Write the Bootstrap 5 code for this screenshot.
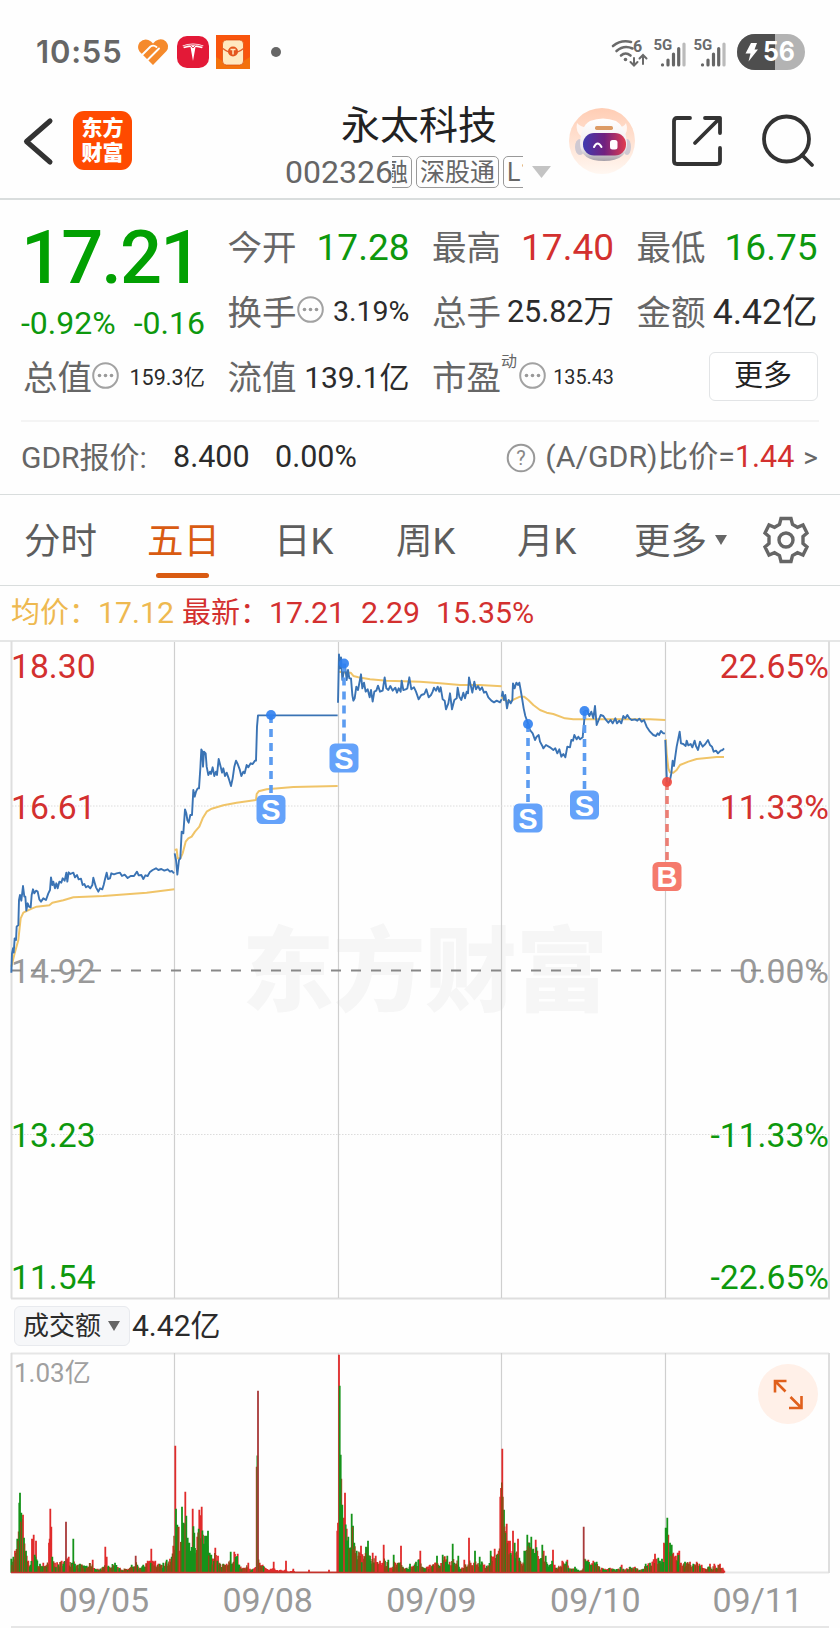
<!DOCTYPE html>
<html lang="zh-CN">
<head>
<meta charset="utf-8">
<meta name="viewport" content="width=device-width, initial-scale=1">
<title>永太科技 002326</title>
<link href="https://cdn.jsdelivr.net/npm/bootstrap@5.3.0/dist/css/bootstrap.min.css" rel="stylesheet">
<style>
  :root { --up:#d3302f; --down:#0d980d; --ink:#2b2b2b; --soft:#666; --accent:#d95b12; --rule:#d9dddd; }
  body { width:840px; height:1628px; overflow:hidden; background:#fefefe; color:var(--ink); line-height:1; font-family:Roboto,"Noto Sans CJK SC",sans-serif; }
  svg { display:block; flex:none; overflow:visible; }
  svg text { font-family:Roboto,"Noto Sans CJK SC",sans-serif; }
  .t-up { color:var(--up); } .t-down { color:var(--down); } .t-soft { color:var(--soft); }
  .statusbar { height:103px; padding-left:36px; padding-right:34px; }
  .clock { font:600 31px/1 Inter,Roboto,sans-serif; letter-spacing:.8px; color:#666; width:101px; }
  .topbar { height:97px; border-bottom:2px solid var(--rule); }
  .logo { width:59px; height:59px; margin-left:21px; border-radius:11px; background:#ff4a00; color:#fff; font-weight:900; font-size:21px; line-height:25px; padding-top:5px; }
  .title-col { width:266px; margin-left:153px; }
  .stock { font-size:39px; line-height:46px; color:#222; padding-left:2px; }
  .code { font-size:32px; line-height:46px; }
  .tags { width:133px; height:32px; overflow:hidden; margin-left:-1px; font-size:25px; }
  .tagbox { border:1.5px solid #999; border-radius:5px; height:32px; line-height:31px; padding:0 3px; white-space:nowrap; flex:none; }
  .quote { height:295px; border-bottom:1px solid var(--rule); padding:0 21px; }
  .quote-grid { display:grid; grid-template-columns:184px 182px 182px 182px; column-gap:22.5px; grid-template-rows:64px 65px 66px; padding-top:15px; height:222px; border-bottom:2px solid #f4f4f4; }
  .lbl { font-size:34.5px; color:var(--soft); white-space:nowrap; padding-top:3px; }
  .zhv { padding-top:2px; }
  .big { font-size:74px; font-weight:500; letter-spacing:-1.9px; color:#02a002; }
  .more-btn { width:109px; height:49px; border:1.5px solid #e2e4e6; border-radius:6px; font-size:29px; padding:2px 0 0; background:#fff; color:#222; margin-right:1px; margin-top:-2px; }
  .gdr { height:71px; font-size:30px; }
  .tabs { height:91px; border-bottom:1px solid var(--rule); font-size:36.5px; color:#5d5d5d; padding-left:24px; }
  .tabs > span { white-space:nowrap; flex:none; padding-top:5px; }
  .tab-on { color:var(--accent); position:relative; }
  .tab-on::after { content:""; position:absolute; left:9px; width:53px; height:5px; bottom:-17px; border-radius:3px; background:var(--accent); }
  .legend-row { height:54px; font-size:30.3px; padding-left:11px; }
  .legend-row span { flex:none; white-space:nowrap; }
  .legend-row .zh { font-size:29px; }
  .vol-head { height:54px; padding-left:14px; }
  .drop { width:116px; height:40px; border:1.5px solid #e8eaee; border-radius:6px; background:#f6f7f9; font-size:26px; padding-left:8px; }
  .dates { height:54px; margin:0 11px; padding-left:11px; border-bottom:2px solid #e6e6e6; font-size:34px; color:#999; }
  .dates span { width:163.8px; text-align:center; flex:none; }
</style>
</head>
<body>

<div class="statusbar d-flex align-items-center">
  <span class="clock">10:55</span>
  <svg width="32" height="28" viewBox="0 0 32 28"><path d="M16 27 2.500 13.500Q-.5 9.500 2.500 4.500 8-1 14 3.500L16 5.500 18.500 3Q24.500-.5 29 3.500 33 8.500 29.500 13Z" fill="#f58a2c"/><path d="M4.500 17.500 13.500 8.500Q16.500 6.500 19.500 9M10.500 22 22 10.500" fill="none" stroke="#fefefe" stroke-width="1.900" stroke-linecap="round"/></svg>
  <svg class="ms-2" width="32" height="32" viewBox="0 0 32 32"><rect width="32" height="32" rx="10" fill="#e31937"/><path d="M5.500 9.500Q16 5.500 26.500 9.500L25 12.200Q22 11.200 18.500 11L16 25 13.500 11Q10 11.200 7 12.200Z" fill="#fff"/><path d="M6 10.500Q16 7 26 10.500M13.500 9.500 16 12 18.500 9.500" fill="none" stroke="#e31937" stroke-width=".8"/></svg>
  <svg style="margin-left:7px" width="34" height="34" viewBox="0 0 34 34"><rect width="34" height="34" fill="#f9550d"/><path d="M0 22Q17 34 34 22V34H0Z" fill="#f3720c"/><rect x="6.500" y="5" width="21" height="25" rx="4" fill="#ffe9c0" stroke="#d84909" stroke-width=".7"/><path d="M7 13.500Q17 22 27.500 13.500" fill="none" stroke="#e2602c" stroke-width="1.200"/><circle cx="17" cy="16.500" r="5" fill="#e4571e"/><path d="M14.500 14.500H19.500M17 14.500V19.500" stroke="#ffe9c0" stroke-width="1.500"/></svg>
  <svg style="margin-left:21px" width="10" height="10"><circle cx="5" cy="5" r="5" fill="#666"/></svg>
  <svg class="ms-auto" width="195" height="40" viewBox="611 31 195 40">
    <g fill="none" stroke="#6a6a6a" stroke-width="2.600" stroke-linecap="round">
      <path d="M613 45Q621 38.500 631 41M616.500 50Q624 43.500 632.500 47.500M621 54.500Q625.500 50.500 630.500 54.500"/>
      <path d="M634 57V64M630.500 61 634 64.500 637.500 61M643 63V54.500M639.500 57.500 643 54 646.500 57.500" stroke-width="2"/></g>
    <circle cx="625.500" cy="58.500" r="1.800" fill="#6a6a6a"/>
    <text x="633" y="50.500" font-size="16" font-weight="700" fill="#6a6a6a">6</text>
    <text x="653.500" y="49" font-size="15" font-weight="700" fill="#6a6a6a">5G</text>
    <text x="693.500" y="49" font-size="15" font-weight="700" fill="#6a6a6a">5G</text>
    <g stroke="#666" stroke-width="3.200" stroke-linecap="round"><path d="M662.500 63.800V64M668 59V64M673.500 53V64M678.700 47.500V64"/><path d="M684 43V64" stroke="#bbb"/></g>
    <g stroke="#666" stroke-width="3.200" stroke-linecap="round"><path d="M702.500 63.800V64M708 59V64M713.500 53V64M718.700 47.500V64"/><path d="M724 43V64" stroke="#bbb"/></g>
    <rect x="737" y="33" width="68" height="36" rx="18" fill="#b3b3b3"/><path d="M775 33H755A18 18 0 0 0 755 69H775Z" fill="#4e4e4e"/>
    <path d="M751 42H757L754.500 48.500H758L748.500 60.500 750.500 52.500H745.500Z" fill="#fff"/>
    <text x="763" y="60" font-size="27" font-weight="700" fill="#fff" style="font-family:Inter,sans-serif" textLength="32" lengthAdjust="spacingAndGlyphs">56</text>
  </svg>
</div>

<div class="topbar d-flex align-items-start">
  <svg style="margin-left:22px;margin-top:14px" width="30" height="50" viewBox="0 0 30 50"><path d="M28 4 4.500 24.500 28 45" fill="none" stroke="#333" stroke-width="5" stroke-linecap="round" stroke-linejoin="round"/></svg>
  <div class="logo text-center mt-2">东方<br>财富</div>
  <div class="title-col text-center">
    <div class="stock">永太科技</div>
    <div class="code t-soft d-flex align-items-center"><span>002326</span>
      <div class="tags d-flex gap-1"><span class="tagbox" style="margin-left:-13px">融</span><span class="tagbox">深股通</span><span class="tagbox">L1</span></div>
      <svg style="margin-left:9px" width="19" height="12"><path d="M0 0H19L9.500 12Z" fill="#c4c4c4"/></svg>
    </div>
  </div>
  <svg style="margin-left:17px;margin-top:4px" width="68" height="68" viewBox="0 0 68 68">
    <defs><linearGradient id="peach" x2="0" y2="1"><stop stop-color="#ffcdb4"/><stop offset="1" stop-color="#fff7f1"/></linearGradient>
    <linearGradient id="visor"><stop stop-color="#3f3bb0"/><stop offset=".5" stop-color="#71217f"/><stop offset="1" stop-color="#e13c50"/></linearGradient>
    <linearGradient id="shell" x2="0" y2="1"><stop stop-color="#fff"/><stop offset=".7" stop-color="#efebed"/><stop offset="1" stop-color="#a59fa8"/></linearGradient></defs>
    <circle cx="34" cy="34" r="33" fill="url(#peach)"/>
    <path d="M9 16Q7 25 14 30L21 20Q13 21 9 16M58 16Q61 24 55 30L48 20Q56 21 58 16" fill="#fff6f2"/>
    <ellipse cx="12" cy="40" rx="5" ry="8" fill="#cfc9d2"/><ellipse cx="59" cy="40" rx="4" ry="8" fill="#cfc9d2"/>
    <path d="M22 14Q35 9 48 14Q57 19 59 35 60 54 36 54 12 54 12 36 13 19 22 14Z" fill="url(#shell)"/>
    <rect x="15" y="26" width="43" height="22.500" rx="11" fill="url(#visor)"/>
    <rect x="27" y="19" width="18" height="4" rx="1.700" fill="#dc9b65"/>
    <path d="M26 40Q29.500 33 33.500 40" fill="none" stroke="#fff" stroke-width="2" stroke-linecap="round"/><rect x="42" y="33" width="7.500" height="9.500" rx="2.500" fill="#fff"/>
  </svg>
  <svg style="margin-left:36px;margin-top:13px" width="50" height="50" viewBox="0 0 50 50" fill="none" stroke="#333" stroke-width="3.800" stroke-linecap="round" stroke-linejoin="round"><path d="M18 2H5Q2 2 2 5V45Q2 48 5 48H45Q48 48 48 45V32M33 2H48V17M48 2 23 27"/></svg>
  <svg style="margin-left:39px;margin-top:9px" width="56" height="56" viewBox="0 0 56 56" fill="none" stroke="#333" stroke-width="3.800" stroke-linecap="round"><circle cx="25.500" cy="27" r="22.500"/><path d="M41 43 51 53"/></svg>
</div>

<section class="quote">
  <div class="quote-grid">
    <div class="big d-flex align-items-center" style="padding-top:22px">17.21</div>
    <div class="d-flex align-items-center justify-content-between"><span class="lbl">今开</span><span class="t-down" style="font-size:37px">17.28</span></div>
    <div class="d-flex align-items-center justify-content-between"><span class="lbl">最高</span><span class="t-up" style="font-size:37px">17.40</span></div>
    <div class="d-flex align-items-center justify-content-between"><span class="lbl">最低</span><span class="t-down" style="font-size:37px;margin-right:1px">16.75</span></div>

    <div class="d-flex align-items-center t-down" style="font-size:32px;padding-top:22px"><span>-0.92%</span><span class="ms-auto">-0.16</span></div>
    <div class="d-flex align-items-center"><span class="lbl">换手</span><svg style="margin-top:-4px" width="27" height="27" viewBox="0 0 27 27"><circle cx="13.500" cy="13.500" r="12.300" fill="none" stroke="#a2a2a2" stroke-width="2"/><g fill="#999"><circle cx="7.500" cy="13.500" r="1.800"/><circle cx="13.500" cy="13.500" r="1.800"/><circle cx="19.500" cy="13.500" r="1.800"/></g></svg><span class="ms-auto zhv" style="font-size:28.500px">3.19%</span></div>
    <div class="d-flex align-items-center justify-content-between"><span class="lbl">总手</span><span class="zhv" style="font-size:30.500px">25.82万</span></div>
    <div class="d-flex align-items-center justify-content-between"><span class="lbl">金额</span><span class="zhv" style="font-size:35.500px;margin-right:1px">4.42亿</span></div>

    <div class="d-flex align-items-center"><span class="lbl" style="padding-left:2px">总值</span><svg style="margin-top:-4px" width="27" height="27" viewBox="0 0 27 27"><circle cx="13.500" cy="13.500" r="12.300" fill="none" stroke="#a2a2a2" stroke-width="2"/><g fill="#999"><circle cx="7.500" cy="13.500" r="1.800"/><circle cx="13.500" cy="13.500" r="1.800"/><circle cx="19.500" cy="13.500" r="1.800"/></g></svg><span class="ms-auto zhv" style="font-size:21.500px">159.3亿</span></div>
    <div class="d-flex align-items-center justify-content-between"><span class="lbl">流值</span><span class="zhv" style="font-size:30px">139.1亿</span></div>
    <div class="d-flex align-items-center"><span class="lbl">市盈</span><span class="t-soft align-self-start" style="font-size:16px;padding-top:10px">动</span><svg style="margin-top:-4px;margin-left:2px" width="27" height="27" viewBox="0 0 27 27"><circle cx="13.500" cy="13.500" r="12.300" fill="none" stroke="#a2a2a2" stroke-width="2"/><g fill="#999"><circle cx="7.500" cy="13.500" r="1.800"/><circle cx="13.500" cy="13.500" r="1.800"/><circle cx="19.500" cy="13.500" r="1.800"/></g></svg><span class="ms-auto zhv" style="font-size:19.800px">135.43</span></div>
    <div class="d-flex align-items-center justify-content-end"><button class="btn more-btn">更多</button></div>
  </div>
  <div class="gdr d-flex align-items-center">
    <span class="t-soft" style="width:152px">GDR报价:</span><span style="width:102px;font-size:30.500px">8.400</span><span style="font-size:30.500px">0.00%</span>
    <svg class="ms-auto" width="30" height="30" viewBox="0 0 30 30"><circle cx="15" cy="15" r="13.300" fill="none" stroke="#999" stroke-width="2"/><text x="15" y="22" font-size="20" text-anchor="middle" fill="#888">?</text></svg>
    <span class="t-soft text-nowrap" style="margin-left:9px;font-size:30.300px">(A/GDR)比价=</span><span class="t-up" style="font-size:30.500px">1.44</span><span class="t-soft" style="margin-left:9px;margin-right:1px;font-size:28px">&gt;</span>
  </div>
</section>

<nav class="tabs d-flex align-items-center">
  <span style="width:123px">分时</span>
  <span class="tab-on" style="width:127px">五日</span>
  <span style="width:122px">日K</span><span style="width:121px">周K</span><span style="width:117px">月K</span><span>更多</span>
  <svg style="margin-left:8px" width="12" height="10"><path d="M0 0H12L6 10Z" fill="#666"/></svg>
  <svg style="margin-left:36px" width="46" height="48" viewBox="-23 -24 46 48" fill="none" stroke="#666" stroke-width="3.400"><circle r="7"/><path d="M-5-21.500H5L6.500-15.500 11.500-12.700 17-15 21-7 17-3.500V3.500L21 7 17 15 11.500 12.700 6.500 15.500 5 21.500H-5L-6.500 15.500-11.500 12.700-17 15-21 7-17 3.500V-3.500L-21-7-17-15-11.500-12.700-6.500-15.500Z"/></svg>
</nav>

<div class="legend-row d-flex align-items-center">
  <span style="width:171px;color:#eeb950"><span class="zh">均价：</span>17.12</span>
  <span class="t-up" style="width:179px"><span class="zh">最新：</span>17.21</span>
  <span class="t-up" style="width:64px">2.29</span><span class="t-up" style="margin-left:11px">15.35%</span>
</div>

<svg width="840" height="659" viewBox="0 640 840 659" id="price">
  <text x="242" y="1004" font-size="92" font-weight="900" fill="#f6f6f6" textLength="366">东方财富</text>
  <path d="M0 641H840" stroke="#dcdede" stroke-width="1.500"/>
  <path d="M11.500 641V1298.500M829 641V1298.500M11 1298.500H830" stroke="#dedede" stroke-width="2" fill="none"/>
  <path d="M174.500 642V1298M338.500 642V1298M501.500 642V1298M665.500 642V1298" stroke="#cfcfcf" stroke-width="1.200"/>
  <path d="M12 806H828M12 1134.500H828" stroke="#dcdcdc" stroke-width="1" stroke-dasharray="1.500 1.500"/>
  <g font-size="33.700">
    <g fill="#d3302f"><text x="11" y="678">18.30</text><text x="11" y="819">16.61</text><g text-anchor="end"><text x="829" y="678">22.65%</text><text x="829" y="819">11.33%</text></g></g>
    <g fill="#999"><text x="11" y="983">14.92</text><text x="829" y="983" text-anchor="end">0.00%</text></g>
    <g fill="#0d980d"><text x="11" y="1147">13.23</text><text x="11" y="1289">11.54</text><g text-anchor="end"><text x="829" y="1147">-11.33%</text><text x="829" y="1289">-22.65%</text></g></g>
  </g>
  <path d="M11 970.500H828" stroke="#888" stroke-width="1.800" stroke-dasharray="10 10"/>
  <g fill="none" stroke-linejoin="round">
    <g transform="translate(0 640) scale(.33333)">
      <g stroke="#f0c468" stroke-width="6">
        <path d="M34 980 44 940 55 900 62 835 70 818 95 806 110 800 148 796 157 788 190 781 220 772 310 768 440 758 523 748"/>
        <path d="M524 630 530 628 533 655 541 655 548 640 557 605 565 595 575 590 585 575 598 560 608 535 620 515 635 506 670 496 710 488 768 480 770 462 776 454 800 448 880 441 1013 438"/></g>
      <g stroke="#3a73b4" stroke-width="5.700">
        <path d="M34 998 36 940 39 925 41 938 44 895 48 900 50 860 55 855 57 780 60 765 64 782 69 738 73 770 76 770 79 812 83 790 87 800 92 802 95 765 99 748 103 760 108 752 113 755 118 778 123 785 130 775 138 780 145 760 150 750 153 712 157 735 160 725 165 745 169 730 173 745 178 725 184 728 188 715 194 722 199 698 202 725 206 697 211 702 220 698 225 712 231 705 236 718 243 716 248 735 253 732 258 742 264 738 271 745 277 735 280 713 284 728 288 742 295 755 300 745 307 748 311 735 315 718 320 698 324 717 330 715 334 700 342 703 350 700 360 698 366 708 374 704 383 714 392 708 402 708 411 695 416 706 424 705 430 717 436 706 443 708 449 697 458 690 468 685 475 690 484 687 493 692 503 688 510 695 516 693 522 700"/>
        <path d="M524 640 528 660 532 704 537 660 541 655 545 575 550 580 555 508 559 520 562 540 566 548 571 525 576 525 580 450 584 470 588 455 593 445 597 445 601 385 604 328 607 335 609 380 612 335 617 340 620 380 625 405 630 395 633 402 638 382 643 408 648 395 651 405 656 357 662 380 666 398 670 385 675 408 680 398 686 415 693 438 698 415 703 380 708 362 713 372 719 388 724 408 730 395 734 400 740 375 745 382 752 370 758 372 765 362 768 362 771 260 774 226 1013 226"/></g>
    </g>
    <g transform="translate(320 640) scale(.33333)">
      <g stroke="#f0c468" stroke-width="6">
        <path d="M57 95 80 98 92 98 100 108 115 112 150 118 200 122 300 125 360 130 420 135 480 135 545 139"/>
        <path d="M545 170 552 180 570 185 582 178 600 170 612 170 625 180 640 195 660 210 680 218 700 222 735 235 760 238 990 238 1036 240"/></g>
      <g stroke="#3a73b4" stroke-width="5.700">
        <path d="M54 188 57 43 60 85 63 52 67 120 72 90 75 75 80 120 84 90 88 115 93 115 97 165 100 182 104 175 109 140 114 150 123 103 127 145 132 128 137 155 143 148 149 172 153 150 158 185 163 155 169 152 174 137 180 155 188 152 194 112 199 145 205 150 211 138 218 152 226 143 231 158 236 145 242 155 245 122 250 150 257 148 262 145 268 112 274 148 282 142 288 155 296 178 304 165 313 162 319 148 326 172 333 165 338 155 342 143 348 152 353 140 358 155 362 142 368 178 374 182 378 208 385 190 390 160 396 208 403 180 410 175 413 143 418 170 424 180 430 158 435 175 440 155 444 160 447 112 453 140 457 158 463 125 468 148 474 138 480 150 486 142 492 158 498 155 505 172 514 182 522 187 530 182 540 187 545 178"/>
        <path d="M545 170 548 155 552 180 556 165 561 205 566 180 572 190 577 180 579 130 584 145 589 128 594 135 598 128 602 150 607 180 611 205 616 228 624 250 630 270 638 280 645 300 650 290 656 285 660 305 667 318 670 325 678 315 690 322 700 330 706 325 712 340 718 328 724 350 730 342 736 352 742 320 750 322 754 300 759 302 763 285 770 298 775 290 780 298 788 292 792 250 795 213 802 212 808 228 814 215 820 235 825 198 830 255 836 240 842 225 850 228 858 240 865 248 872 240 878 250 886 235 891 250 898 242 904 250 910 228 916 235 922 225 928 235 935 240 945 238 952 242 958 236 965 245 972 240 980 260 990 275 1000 285 1008 288 1013 280 1017 285 1023 273 1030 280 1035 280"/></g>
    </g>
    <g transform="translate(560 640) scale(.33333)">
      <path stroke="#f0c468" stroke-width="6" d="M317 297 320 340 325 385 330 397 340 398 350 390 360 375 385 365 410 357 440 354 470 351 492 351"/>
      <path stroke="#3a73b4" stroke-width="5.700" d="M316 300 319 380 321 430 325 435 330 420 334 400 338 362 342 378 345 355 350 320 355 295 359 275 363 310 370 312 377 318 380 302 385 316 392 312 397 322 404 302 408 318 414 330 420 305 428 320 436 312 444 300 450 315 456 320 461 335 468 332 474 340 482 332 488 330 492 325"/>
    </g>
  </g>
</svg>

<div class="vol-head d-flex align-items-center">
  <div class="drop d-flex align-items-center"><span>成交额</span><svg style="margin-left:7px" width="12" height="10"><path d="M0 0H12L6 10Z" fill="#666"/></svg></div>
  <span style="font-size:30px;margin-left:2px">4.42亿</span>
</div>

<svg width="840" height="221" viewBox="0 1353 840 221" id="volume">
  <path d="M11 1353.500H829M11 1572.500H829" stroke="#e6e6e6" stroke-width="2"/>
  <path d="M11.500 1353V1573M829 1353V1573" stroke="#dedede" stroke-width="2"/>
  <path d="M174.500 1353V1572M338.500 1353V1572M501.500 1353V1572M665.500 1353V1572" stroke="#cfcfcf" stroke-width="1.200"/>
  <text x="14" y="1381.500" font-size="26" fill="#a0a0a0">1.03亿</text>
  <g id="volbars"></g>
  <circle cx="788" cy="1394" r="30" fill="#fff0e8"/>
  <path d="M786.500 1381H775V1392.500M775.500 1381.500 785.500 1391.500M790.500 1397 801 1407.500M789 1408H801.500V1396" fill="none" stroke="#e0601c" stroke-width="2.600"/>
</svg>

<div class="dates d-flex align-items-center"><span>09/05</span><span>09/08</span><span>09/09</span><span>09/10</span><span style="width:161px">09/11</span></div>

<script src="https://cdn.jsdelivr.net/npm/bootstrap@5.3.0/dist/js/bootstrap.bundle.min.js"></script>
<script>
  const NS = 'http://www.w3.org/2000/svg';
  const el = (tag, attrs, parent, text) => {
    const n = document.createElementNS(NS, tag);
    for (const k in attrs) n.setAttribute(k, attrs[k]);
    if (text) n.textContent = text;
    parent.appendChild(n);
  };

  // Trade markers: x, price point y, label y, side
  [[271,715,809.5,'S'],[344,663.5,758,'S'],[528,724,818,'S'],[584.5,711,805,'S'],[667,782,876.5,'B']].forEach(([x,y,b,side]) => {
    const g = document.getElementById('price'), buy = side === 'B';
    el('path', {d:`M${x} ${y}V${b-15}`, stroke: buy ? '#ec7e74' : '#5c9cf0', 'stroke-width':3.6, 'stroke-dasharray':'8 6'}, g);
    el('circle', {cx:x, cy:y, r:5, fill: buy ? '#ef4a40' : '#2f80ef', opacity:.9}, g);
    el('rect', {x:x-14.5, y:b-14.5, width:29, height:29, rx:5.5, fill: buy ? '#f57a6c' : '#64a2fa'}, g);
    el('text', {x:x, y:b+10.5, 'font-size':29, 'font-weight':700, fill:'#fff', 'text-anchor':'middle', style:'font-family:"Liberation Sans",sans-serif'}, g, side);
  });

  // Turnover samples: position:height, suffixed with g (falling) or r (rising) where known
  const sessions = [
    [0, '34:14 45:22 52:34 58:70g 60:80g 64:60 69:58r 72:35 78:22g 85:12 92:8 96:34r 101:38r 104:18g 108:32r 112:12 120:9 130:10r 140:8 147:30r 151:64r 154:46r 157:16g 165:10 185:12 190:9 198:51d 200:14 206:16r 215:10 220:34g 225:9 240:9 260:7 278:13r 285:4 310:6 316:26r 320:16r 325:7 345:10g 360:5 385:4 395:8 400:6 407:17d 412:8 420:5 430:8g 443:12r 450:12r 454:24r 458:12r 466:12 475:9r 490:10 500:13g 510:14 515:16 520:27r 526:127r 528:64g 532:48g 536:46 540:22 546:66g 551:50g 556:81r 559:57g 563:35g 568:30g 573:22 578:64r 583:40g 588:20r 592:36r 598:63r 605:66r 609:38r 615:37g 620:37g 624:42g 629:20g 634:18 640:14 646:25r 650:12 654:17r 660:9 670:9 680:9 692:21g 697:9 703:21r 713:19r 718:8 730:5 745:10r 750:4 765:5r 770:106r 774:182d 779:10r 788:8r 795:5r 810:3r 821:11r 825:3r 855:3r 858:12r 862:1r 880:4r 885:1r 925:1r 927:3r 930:1r 985:1r 987:3r 990:1r 1010:1r 1012:42r'],
    [330, '24:50r 27:218r 29:187g 32:118g 34:94r 37:68g 40:55r 45:80r 50:44r 55:36 60:25 65:59g 69:47g 73:30 80:22 93:27r 100:14 108:26g 114:32g 120:17 128:20 137:17r 145:9 150:12 158:10 161:28r 165:12 175:13g 180:5 191:18g 196:10 205:10r 213:27r 218:6 230:5 240:9 250:7 258:11 265:13 271:22r 276:6 290:6 300:8 315:10 321:17g 325:8 338:18g 352:17g 357:8 368:29g 373:10 385:17g 392:4 403:13r 410:6 417:35r 422:10 430:7 435:22g 440:8 449:16g 457:10 470:7 482:22g 488:16 494:24r 500:18 506:22r 511:76r 517:124r 522:63g 526:40 530:49r 535:32 540:32 545:18 549:42r 554:30g 558:20 564:34r 568:15 575:9 583:22g 588:22 592:38g 598:30 604:36g 610:24g 617:33r 622:22 627:12 637:28g 641:22 647:17g 652:9 660:8 669:23r 674:8 680:5 697:12r 705:9 712:13r 716:5 725:4 735:6 745:3 757:3 761:46d 764:14 772:12'],
    [580, '22:10 25:13r 32:8 40:12 50:11g 58:6 65:5 75:4 90:5 100:4 115:4 125:8r 130:4 150:6g 155:5 165:6 180:3 190:4 197:9g 210:10g 217:11 225:19r 230:14r 235:15 240:12 246:14g 252:30r 257:45g 262:55g 265:38r 270:30g 275:28 280:20 287:17r 293:20r 298:22r 303:10 315:11g 330:11 340:9 350:11 358:9 365:8 375:4 385:6 390:9r 395:4 403:9r 410:5 415:8 420:9r 428:5 433:2r']
  ];
  let seed = 7;
  const rnd = () => (seed = (seed * 16807) % 2147483647) / 2147483647;
  const paths = {r:'', g:'', d:'', m:''};
  const bar = (x, h, c) => { paths[c] += `M${x.toFixed(1)} 1572.8v${-h.toFixed(1)}`; };
  sessions.forEach(([off, data]) => {
    const pts = data.split(' ').map(s => { const m = s.match(/(\d+):(\d+)(\w?)/); return [off + m[1] / 3, +m[2], m[3]]; });
    pts.forEach(([x, h, c], i) => {
      const next = pts[i + 1];
      if (next) for (let p = x + .7; p < next[0] - .3; p += .7) {
        const t = (p - x) / (next[0] - x), low = Math.min(h, next[1]);
        const hh = Math.min(h + (next[1] - h) * t, low * 1.4 + 1) * (.5 + rnd() * .5);
        const pick = rnd();
        bar(p, Math.max(hh, 1), c === 'r' && low < 4 ? 'r' : pick < .38 ? 'r' : pick < .62 ? 'g' : 'm');
      }
      bar(x, h, c || (rnd() < .5 ? 'r' : 'g'));
    });
  });
  const vb = document.getElementById('volbars');
  [['r','#e02b2b',1.8],['g','#15931a',1.8],['d','#a83a3a',1.8],['m','#8d4a14',1.3]].forEach(([k, color, w]) =>
    el('path', {d:paths[k], stroke:color, 'stroke-width':w, fill:'none'}, vb));
  el('path', {d:'M11 1572.500H724', stroke:'#c4322a', 'stroke-width':1.4}, vb);
</script>
</body>
</html>
